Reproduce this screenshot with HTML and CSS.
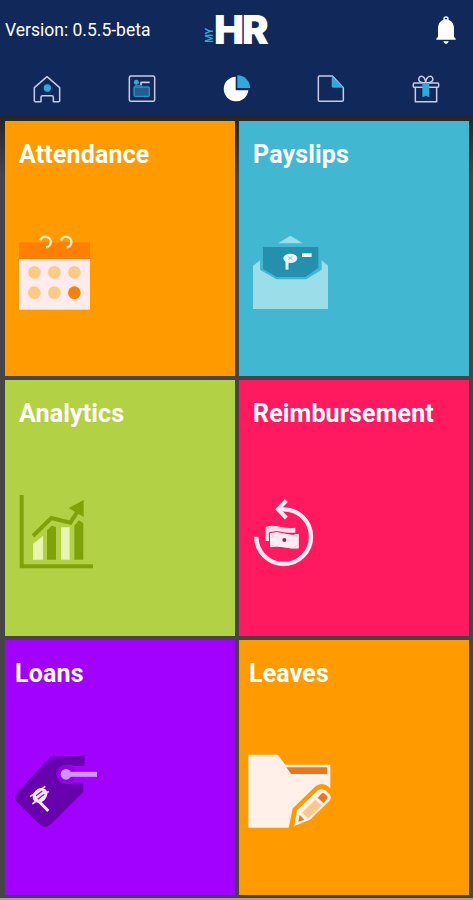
FILE: index.html
```
<!DOCTYPE html>
<html lang="en">
  <head>
    <meta charset="utf-8">
    <meta name="viewport" content="width=device-width, initial-scale=1.0">
    <title>MyHR</title>
    <link rel="stylesheet" href="styles.css">
  </head>
  <body>
    <header class="header">
      <div class="topbar">
        <span class="version">Version: 0.5.5-beta</span>
        <div class="logo">
          <span class="logo-my">MY</span>
          <span class="logo-hr">HR</span>
        </div>
        <svg class="bell" viewBox="0 0 60 84">
          <circle cx="30" cy="9" r="6" fill="none" stroke="#fff" stroke-width="4"/>
          <path d="M30 10C14 11 6 23 6 38V62L1 68V71H59V68L54 62V38C54 23 46 11 30 10Z" fill="#fff"/>
          <path d="M22 76H38Q36 84 30 84Q24 84 22 76Z" fill="#fff"/>
        </svg>
      </div>
      <nav class="tabs">
        <a href="#">
          <svg viewBox="0 0 84 84">
            <path d="M4 38L42 5L80 38V77Q80 80 77 80H61V67Q61 62 56 62H29Q24 62 24 67V80H7Q4 80 4 77Z" fill="none" stroke="#c9cbe6" stroke-width="4.5" stroke-linejoin="round"/>
            <circle cx="43" cy="39" r="11" fill="#2fa9d9"/>
          </svg>
        </a>
        <a href="#">
          <svg viewBox="0 0 84 84">
            <rect x="4" y="3" width="76" height="76" rx="5" fill="none" stroke="#c9cbe6" stroke-width="4.5"/>
            <circle cx="25" cy="22" r="7.5" fill="#2fa9d9"/>
            <path d="M38 22H65M39 22V31" fill="none" stroke="#c9cbe6" stroke-width="5"/>
            <rect x="18" y="36" width="46" height="28" rx="3" fill="#245d91" stroke="#2f91c2" stroke-width="4"/>
            <path d="M21 36V32H41V37" fill="none" stroke="#2f91c2" stroke-width="3"/>
          </svg>
        </a>
        <a href="#">
          <svg viewBox="0 0 84 84">
            <path d="M38 5A37 37 0 1 0 76 46H38Z" fill="#fff"/>
            <path d="M43 1A37 37 0 0 1 81 39H43Z" fill="#2fa9d9"/>
          </svg>
        </a>
        <a href="#">
          <svg viewBox="0 0 84 84">
            <path d="M46 3H7Q4 3 4 7V75Q4 79 8 79H75Q79 79 79 75V38L46 3Z" fill="none" stroke="#c9cbe6" stroke-width="4.5" stroke-linejoin="round"/>
            <path d="M44 2L80 38H48Q44 38 44 34Z" fill="#2fa9d9"/>
          </svg>
        </a>
        <a href="#">
          <svg viewBox="0 0 84 84">
            <g fill="none" stroke="#c9cbe6" stroke-width="4.5" stroke-linejoin="round">
              <path d="M10 38V80H74V38"/>
              <rect x="4" y="24" width="76" height="13" rx="3"/>
              <path d="M41 23C25 25 18 18 21 9C26 0 39 2 41 23C43 2 57 0 62 9C65 18 57 25 41 23Z"/>
            </g>
            <path d="M31 24H52V67L42 62L31 67Z" fill="#2fa9d9"/>
          </svg>
        </a>
      </nav>
    </header>

    <main class="tiles">
      <a class="tile attendance" href="#">
        <h2>Attendance</h2>
        <svg viewBox="15 0 330 330">
          <rect x="57" y="67" width="213" height="50" fill="#ff8000"/>
          <rect x="57" y="117" width="213" height="152" fill="#ffebee"/>
          <path d="M121 61A16 16 0 1 1 138 82M183 61A16 16 0 1 1 200 82" fill="none" stroke="#fff1cf" stroke-width="7"/>
          <g fill="#fbcb86">
            <circle cx="103" cy="157" r="19"/>
            <circle cx="163" cy="157" r="19"/>
            <circle cx="223" cy="157" r="19"/>
            <circle cx="103" cy="218" r="19"/>
            <circle cx="163" cy="218" r="19"/>
          </g>
          <circle cx="223" cy="218" r="19" fill="#f58207"/>
        </svg>
      </a>

      <a class="tile payslips" href="#">
        <h2>Payslips</h2>
        <svg viewBox="12 0 330 330">
          <path d="M129 70L166 47L203 70Z" fill="#9bdde9"/>
          <path d="M54 267V137L75 121V149L124 178H214L260 149V121L279 137V267Z" fill="#9bdde9"/>
          <path d="M84 81H250V144L211 171H125L84 147Z" fill="#2490ae"/>
          <path d="M156 149V105" stroke="#e5f3ff" stroke-width="9"/>
          <ellipse cx="166" cy="115" rx="21" ry="14" fill="#e5f3ff"/>
          <path d="M160 110L172 119M160 119L172 110" stroke="#a5bfd8" stroke-width="3"/>
          <rect x="201" y="100" width="29" height="11" fill="#e9faff"/>
        </svg>
      </a>

      <a class="tile analytics" href="#">
        <h2>Analytics</h2>
        <svg viewBox="15 0 330 330">
          <path d="M65 45V259H279" fill="none" stroke="#7fa20b" stroke-width="12"/>
          <path d="M99 239V191L129 168V239ZM183 239V142H209V239Z" fill="#e6f4b4"/>
          <path d="M141 239V151L155 137L168 141V239ZM223 239V137L237 121L250 130V239Z" fill="#7fa20b"/>
          <path d="M99 168L154 114L211 128L235 91" fill="none" stroke="#7fa20b" stroke-width="12"/>
          <path d="M206 84L251 60V111Z" fill="#7fa20b"/>
        </svg>
      </a>

      <a class="tile reimbursement" href="#">
        <h2>Reimbursement</h2>
        <svg viewBox="12 0 330 330">
          <path d="M64 170A82 82 0 1 0 146 88H129" fill="none" stroke="#ffebf1" stroke-width="13"/>
          <path d="M154 62L129 88L154 114" fill="none" stroke="#ffebf1" stroke-width="12"/>
          <path d="M92 140Q112 134 135 140T181 143V158H106V183H92Z" fill="#ffdce6"/>
          <path d="M103 158Q125 151 149 159T193 159V207Q169 209 147 204T104 204Z" fill="#ffebf1" stroke="#dc1959" stroke-width="3"/>
          <path d="M96 156V145L108 143M110 170L116 165M181 166L187 171M110 195L117 200M180 201L187 196" fill="none" stroke="#f8a0b9" stroke-width="2"/>
          <circle cx="148" cy="180" r="6" fill="#a91d4d"/>
        </svg>
      </a>

      <a class="tile loans" href="#">
        <h2>Loans</h2>
        <svg viewBox="15 0 330 330">
          <path d="M151 50L254 47V78H221A29 29 0 1 0 221 128H250V156L153 253Q137 268 120 254L51 187Q39 174 51 158Z" fill="#6900ae"/>
          <circle cx="198" cy="103" r="29" fill="#8f05df"/>
          <circle cx="198" cy="103" r="16" fill="#cf94ff"/>
          <path d="M198 103H291" stroke="#cf94ff" stroke-width="15"/>
          <g fill="none" stroke="#f8e5ff">
            <path d="M104 171L145 213" stroke-width="9"/>
            <ellipse cx="120" cy="166" rx="22" ry="17" transform="rotate(-45 120 166)" fill="#f8e5ff" stroke-width="5"/>
            <path d="M90 170L136 139M97 192L146 154" stroke-width="5"/>
          </g>
          <path d="M108 167L127 153M113 178L133 163" stroke="#7a22b5" stroke-width="4"/>
        </svg>
      </a>

      <a class="tile leaves" href="#">
        <h2>Leaves</h2>
        <svg viewBox="12 0 330 330">
          <path d="M40 44H128L151 74H286V144L256 136L177 210L165 263H40Z" fill="#fff0e9"/>
          <path d="M154 82H277V102H168Z" fill="#eb771c"/>
          <path d="M165 268L177 208L246 141Q263 131 278 144L294 160" fill="none" stroke="#ff9b00" stroke-width="9"/>
          <path d="M178 258L186 211L249 151Q262 143 274 153L285 165Q291 174 282 184L225 239Z" fill="#fff0e9"/>
          <path d="M201 218L241 179L260 197L220 235Z" fill="#fdc78c"/>
          <path d="M248 173L261 160Q265 157 269 161L277 169Q280 173 276 177L265 189Z" fill="#eb771c"/>
          <path d="M194 225L208 239L190 245Z" fill="#eb771c"/>
        </svg>
      </a>
    </main>
  </body>
</html>
```
FILE: styles.css
```
* {
  box-sizing: border-box;
}
body {
  background:     #454548;
  border-bottom:  2px solid #a4a4a6;
  display:        flex;
  flex-direction: column;
  font-family:    Roboto, sans-serif;
  height:         900px;
  margin:         0;
  overflow:       hidden;
}
a {
  color:           white;
  text-decoration: none;
}
svg {
  display: block;
}

.header {
  background: #11285a;
  color:      white;
  height:     116px;
}
.topbar {
  align-items:           center;
  display:               grid;
  grid-template-columns: 200px 1fr 20px;
  height:                60px;
  padding:               0 17px 0 5px;
}
.version {
  font-size:   17.5px;
  line-height: 20px;
}
.logo {
  align-items: flex-end;
  display:     flex;
  height:      30px;
}
.logo-my {
  color:          #2fa9d9;
  font-size:      10px;
  font-weight:    700;
  line-height:    9px;
  margin-bottom:  2px;
  transform:      rotate(180deg);
  writing-mode:   vertical-rl;
}
.logo-hr {
  font-family:    Inter, sans-serif;
  font-size:      40px;
  font-weight:    900;
  letter-spacing: -2px;
  line-height:    30px;
}
.bell {
  height: 28px;
  width:  20px;
}
.tabs {
  display:         flex;
  justify-content: space-between;
  padding:         15px 33px 0;
}
.tabs svg {
  height: 28px;
  width:  28px;
}

.tiles {
  background:            linear-gradient(#252528, #454548 60px);
  display:               grid;
  flex:                  1;
  gap:                   4px;
  grid-template-columns: 230px 230px;
  grid-template-rows:    255px 255.5px 255px;
  padding:               5px 4px 0 5px;
}
.tile h2 {
  font-size:      25px;
  font-weight:    700;
  letter-spacing: 0.15px;
  line-height:    30px;
  margin:         0;
  padding:        19px 0 0 14px;
}
.tile svg {
  height:     110px;
  margin-top: 51px;
  width:      110px;
}
.attendance {
  background: #ff9b00;
}
.payslips {
  background: #42b7d1;
}
.analytics {
  background: #b3d144;
}
.reimbursement {
  background: #ff195f;
}
.loans {
  background: #a200ff;
}
.leaves {
  background: #ff9b00;
}
.attendance svg,
.payslips svg {
  margin-top: 50px;
}
.loans h2,
.leaves h2 {
  padding-left: 10px;
}
```
